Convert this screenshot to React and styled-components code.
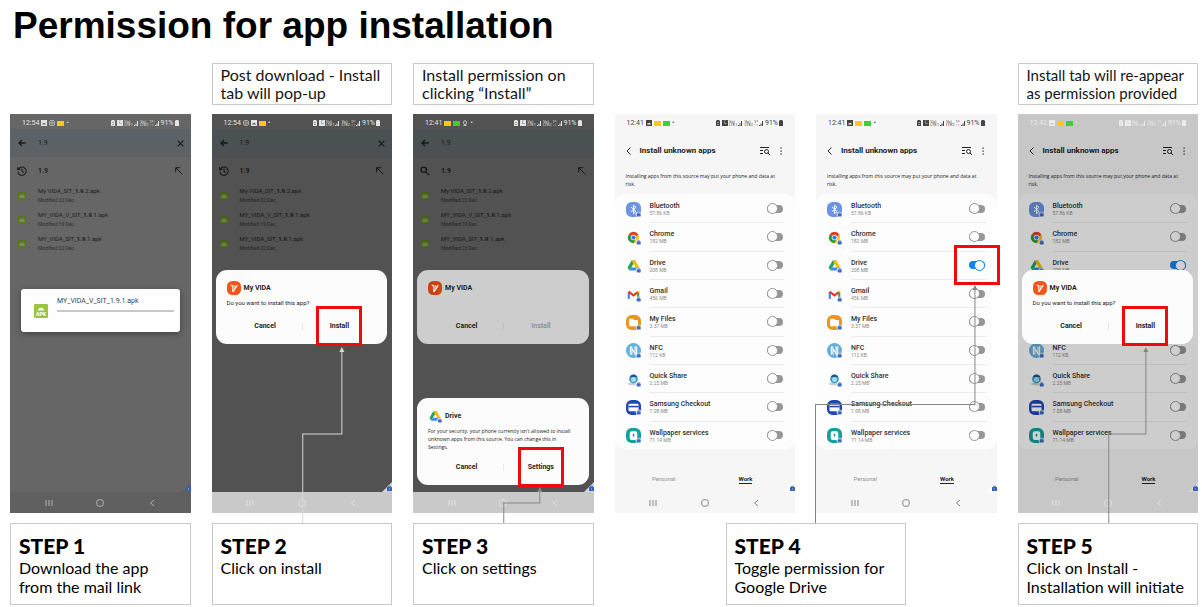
import React, { useId } from 'react';
import styled, { createGlobalStyle, css } from 'styled-components';

const GlobalStyle = createGlobalStyle`
   * {
      box-sizing: border-box;
   }
   body {
      margin: 0;
      background: #fff;
      color: #000;
      font-family: Roboto, "Liberation Sans", sans-serif;
   }
   button, input {
      font: inherit;
      color: inherit;
   }
`

const Page = styled.main`
   display: flex;
   flex-direction: column;
   padding: 0 4px 0 10px;
`
const Title = styled.h1`
   margin: 0;
   padding: 5px 0 0 3px;
   height: 63px;
   font: bold 37px/42px "Liberation Sans", sans-serif;
   white-space: nowrap;
`
const Board = styled.div`
   display: grid;
   grid-template-columns: repeat(6, minmax(0, 1fr));
   grid-template-rows: 42px auto auto;
   column-gap: 21px;
   row-gap: 9px;
`
const Note = styled.p`
   grid-column: ${({ $col }) => $col};
   grid-row: 1;
   margin: 0;
   padding: 2px 8px;
   border: 1px solid #c8c8cc;
   font: ${({ $small }) => $small ? 15 : 16}px/18px Lato, sans-serif;
   color: #151515;
   white-space: nowrap;
`
const StepCard = styled.section`
   grid-column: ${({ $col }) => $col};
   grid-row: 3;
   min-height: 82px;
   padding: 10px 8px 4px;
   border: 1px solid #c8c8cc;
   font: 16px/19px Lato, sans-serif;
   white-space: nowrap;
   ${({ $wide }) => $wide && css`
      margin: 0 91px 0 111px;
   `}
   & h2 {
      margin: 0;
      font: 900 21px/24px Lato, sans-serif;
   }
   & p {
      margin: 0;
   }
`
const Slot = styled.div`
   grid-column: ${({ $col }) => $col};
   grid-row: 2;
   position: relative;
   padding-bottom: 1px;
`
const Screen = styled.div`
   position: relative;
   display: flex;
   flex-direction: column;
   min-height: 399px;
   background: ${({ $bg }) => $bg};
   color: ${({ $ink }) => $ink};
   font-size: 7px;
   line-height: 8px;
   white-space: nowrap;
`
const Spacer = styled.div`
   flex: 1;
`
const Scrim = styled.div`
   position: absolute;
   inset: 0;
   background: rgba(0, 0, 0, 0.19);
`

/* status bar */
const StatusRow = styled.div`
   position: relative;
   z-index: 1;
   display: flex;
   align-items: center;
   height: 15px;
   padding: 3px 11px 0 12px;
   gap: 2px;
   color: ${({ $ink }) => $ink};
`
const Chip = styled.span`
   width: 7px;
   height: 5px;
   background: ${({ $color }) => $color};
`
const Network = styled.span`
   display: flex;
   flex-direction: column;
   font-size: 4px;
   line-height: 3px;
`
const StatusRight = styled.div`
   display: flex;
   align-items: center;
   gap: 1px;
   margin-left: auto;
`
const Battery = styled.span`
   display: flex;
   align-items: center;
`

/* file search screen */
const SearchBar = styled.div`
   display: flex;
   align-items: center;
   height: 28px;
   padding: 0 7px 0 8px;
   background: ${({ $bg }) => $bg};
   & input {
      flex: 1;
      min-width: 0;
      margin-left: 12px;
      padding: 0;
      border: 0;
      outline: 0;
      background: none;
   }
`
const RecentRow = styled.div`
   display: flex;
   align-items: center;
   height: 27px;
   padding: 0 8px 0 7px;
   & b {
      flex: 1;
      margin-left: 11px;
   }
`
const FileRow = styled.div`
   display: flex;
   align-items: center;
   height: 24px;
   padding: 0 8px;
   gap: 12px;
   & p {
      margin: 0;
      padding-bottom: 1px;
      font-size: 6px;
   }
   & small {
      display: block;
      margin-top: 2px;
      font-size: 5px;
      line-height: 7px;
      opacity: 0.8;
   }
`
const IconButton = styled.button`
   display: flex;
   align-items: center;
   justify-content: center;
   padding: 0;
   border: 0;
   background: none;
   cursor: pointer;
`

/* android navigation */
const NavRow = styled.nav`
   position: relative;
   z-index: 1;
   display: flex;
   justify-content: space-around;
   align-items: center;
   height: 21px;
   padding: 0 13px;
   background: ${({ $bg }) => $bg};
   color: ${({ $ink }) => $ink};
`
const WorkCorner = styled.svg`
   position: absolute;
   right: 0;
   bottom: 21px;
   width: 10px;
   height: 10px;
   z-index: 1;
`

/* settings screen */
const SettingsHead = styled.header`
   display: flex;
   align-items: center;
   height: 43px;
   padding: 0 10px;
   & h3 {
      flex: 1;
      margin: 0 0 0 7px;
      font-size: 8px;
      font-weight: 700;
   }
   & button + button {
      margin-left: 7px;
   }
`
const Hint = styled.p`
   margin: 0;
   height: 22px;
   padding: 0 11px;
   font-family: "Open Sans", sans-serif;
   font-size: 5px;
   white-space: normal;
`
const AppList = styled.ul`
   display: flex;
   flex-direction: column;
   min-height: 255px;
   margin: 0;
   padding: 1px 0 0;
   list-style: none;
   background: #fdfdfd;
   border-radius: 10px;
`
const AppItem = styled.li`
   flex: 1;
   display: flex;
   align-items: center;
   padding: 0 11px;
   visibility: ${({ $covered }) => $covered ? 'hidden' : 'visible'};
   & label {
      flex: 1;
      display: flex;
      align-items: center;
      align-self: stretch;
      margin-left: 9px;
      border-bottom: 1px solid #ececec;
   }
   &:last-child label {
      border: 0;
   }
`
const AppText = styled.span`
   flex: 1;
   padding-top: 1px;
   font-weight: 500;
   color: #303030;
   & small {
      display: block;
      font-size: 5px;
      line-height: 6px;
      font-weight: 400;
      color: #8a8a8a;
   }
`
const ToggleBox = styled.span`
   position: relative;
   display: flex;
   margin-right: 1px;
`
const Toggle = styled.input.attrs({ type: 'checkbox' })`
   appearance: none;
   display: flex;
   align-items: center;
   width: 16px;
   height: 8px;
   margin: 0;
   border-radius: 4px;
   background: #969696;
   cursor: pointer;
   &::before {
      content: "";
      width: 9px;
      height: 9px;
      border: 1px solid #969696;
      border-radius: 50%;
      background: #fff;
   }
   &:checked {
      background: #1283ec;
      justify-content: flex-end;
   }
   &:checked::before {
      border-color: #1283ec;
   }
`
const Marker = styled.span`
   position: absolute;
   left: 50%;
   top: 50%;
   width: 46px;
   height: 40px;
   transform: translate(-50%, -50%);
   border: 3px solid #ee0a0d;
   pointer-events: none;
   z-index: 2;
`
const TabRow = styled.div`
   display: flex;
   justify-content: space-around;
   padding: 0 11px 0 6px;
   height: 17px;
   font-size: 6px;
   & button {
      align-self: flex-start;
      padding: 0;
      border: 0;
      border-bottom: 1px solid transparent;
      background: none;
      color: #929292;
      line-height: 8px;
   }
   & button[aria-selected="true"] {
      border-color: #222;
      color: #222;
      font-weight: 700;
   }
`

/* dialogs */
const Sheet = styled.div`
   position: absolute;
   left: 4px;
   right: 5px;
   ${({ $low }) => $low ? 'bottom: 28px;' : 'top: 156px;'}
   min-height: ${({ $low }) => $low ? 87 : 74}px;
   display: flex;
   flex-direction: column;
   padding: 10px 11px 7px;
   border-radius: 11px;
   background: ${({ $bg }) => $bg || '#fcfcfc'};
   color: #222;
   z-index: 1;
   & p {
      margin: 3px 0 0;
      font-size: 6px;
      line-height: 8px;
      white-space: normal;
      ${({ $low }) => $low && css`
         font-family: "Open Sans", sans-serif;
         font-size: 5px;
      `}
   }
`
const SheetTitle = styled.div`
   display: flex;
   align-items: center;
   gap: 3px;
   height: 16px;
   font-weight: 700;
`
const SheetButtons = styled.div`
   display: grid;
   grid-template-columns: 1fr 1px 1fr;
   align-items: center;
   justify-items: center;
   height: 22px;
   margin-top: auto;
   padding-left: 2px;
   & hr {
      width: 1px;
      height: 7px;
      margin: 0;
      border: 0;
      background: rgba(0, 0, 0, 0.07);
   }
   & button {
      position: relative;
      padding: 0;
      border: 0;
      background: none;
      font-weight: 700;
      cursor: pointer;
   }
   & button:disabled {
      font-weight: 500;
      color: #8a8a8a;
   }
`
const DownloadCard = styled.div`
   position: absolute;
   top: 175px;
   left: 11px;
   right: 11px;
   height: 43px;
   display: flex;
   align-items: center;
   gap: 9px;
   padding: 0 6px 0 13px;
   border-radius: 3px;
   background: #fefefe;
   color: #444;
   box-shadow: 0 2px 6px rgba(0, 0, 0, 0.35);
   & div {
      flex: 1;
      padding-bottom: 13px;
   }
   & progress {
      display: block;
      appearance: none;
      width: 100%;
      height: 2px;
      margin-top: 5px;
      border: 0;
      &::-webkit-progress-bar {
         background: #c8c8c8;
      }
   }
`
const Wire = styled.svg`
   position: absolute;
   left: 0;
   top: 0;
   width: 100%;
   height: 409px;
   overflow: visible;
   pointer-events: none;
   z-index: 3;
   color: ${({ $color }) => $color};
`

const Svg = ({ size = 10, box = 24, children, ...rest }) => (
   <svg width={size} height={size} viewBox={`0 0 ${box} ${box}`} fill="none" stroke="currentColor" strokeWidth="2" {...rest}>
      {children}
   </svg>
)

const Connector = ({ d, tip, color }) => (
   <Wire $color={color} viewBox="0 0 180 409" preserveAspectRatio="none">
      <path d={d} fill="none" stroke="currentColor" strokeWidth="1" />
      <path d={`M${tip[0]} ${tip[1]}l-2.500 5h5z`} fill="currentColor" />
   </Wire>
)

const ApkIcon = ({ size, color, label }) => (
   <Svg size={size} stroke="none">
      <rect width="24" height="24" rx="2" fill={color} />
      {label
         ? <>
            <path d="M7 11a5 4.500 0 0 1 10 0z" fill="#fff" />
            <text x="12" y="20" fontSize="9" fontWeight="700" textAnchor="middle" fill="#fff">APK</text>
         </>
         : <path d="M4 17a8 8 0 0 1 16 0zM7 6l3 4M17 6l-3 4" fill="#fff" stroke="#fff" opacity="0.2" />
      }
   </Svg>
)

const VidaIcon = ({ dim }) => (
   <Svg size={14} stroke="none">
      <rect width="24" height="24" rx="9" fill={dim ? '#cc4310' : '#f4551b'} />
      <path d="M6.500 7.500l3.500.5v10.500" stroke="#fff" strokeWidth="1.800" />
      <path d="M10 18.500L17.500 7" stroke="#fff" strokeWidth="2.200" />
      <path d="M13.500 7l-1.500 5" stroke="#fff" strokeWidth="1.200" />
   </Svg>
)

const WorkBadge = () => (
   <g stroke="none">
      <circle cx="20" cy="20" r="4.500" fill="#fff" />
      <rect x="17" y="18" width="6.500" height="5" rx="1" fill="#3f6cc0" />
      <path d="M18.700 18v-1h3v1" stroke="#3f6cc0" strokeWidth="1" fill="none" />
   </g>
)

const DriveShape = () => (
   <g stroke="none">
      <path d="M9 4h6l-6.500 11L5.500 20 2.500 15z" fill="#21a464" />
      <path d="M9 4h6l6.500 11h-6z" fill="#fbbc05" />
      <path d="M8.500 15h13l-3 5h-13z" fill="#4285f4" />
   </g>
)

const appIcons = {
   bluetooth: (
      <>
         <rect width="24" height="24" rx="9" fill="#6d93e6" stroke="none" />
         <path d="M8 8l8 7-4 3.500V5l4 3.500-8 7" stroke="#fff" strokeWidth="1.600" />
      </>
   ),
   chrome: (
      <g stroke="none">
         <circle cx="12" cy="12" r="9" fill="#fbc116" />
         <path d="M12 12L4.200 7.500A9 9 0 0 1 19.800 7.500z" fill="#e33b2e" />
         <path d="M4.200 7.500A9 9 0 0 0 12 21l3.500-8z" fill="#229a48" />
         <circle cx="12" cy="12" r="4.400" fill="#fff" />
         <circle cx="12" cy="12" r="3.400" fill="#3f79e0" />
      </g>
   ),
   drive: <DriveShape />,
   gmail: (
      <g fill="none" strokeWidth="3.500">
         <path d="M4.500 19V8" stroke="#4285f4" />
         <path d="M19.500 19V8" stroke="#34a853" />
         <path d="M4 7.500l8 6 8-6" stroke="#e2392d" />
         <path d="M19.500 9V6.500" stroke="#fbbc05" />
      </g>
   ),
   files: (
      <>
         <rect width="24" height="24" rx="9" fill="#e9981c" stroke="none" />
         <path d="M6 7h5l1.500 2H18v8H6z" fill="#fff" stroke="#fff" strokeLinejoin="round" />
      </>
   ),
   nfc: (
      <>
         <circle cx="12" cy="12" r="12" fill="#64afdc" stroke="none" />
         <path d="M10 6.500H7v11h2.500V8.500l5 9V6.500H17v11h-2" stroke="#fff" strokeWidth="1.700" />
      </>
   ),
   share: (
      <g stroke="none">
         <ellipse cx="12" cy="19" rx="9" ry="2.500" fill="#c9ced4" />
         <circle cx="12" cy="11" r="7" fill="#3b9cc4" />
         <circle cx="12" cy="12" r="4" fill="#a5dcec" />
         <path d="M6 8a6.500 6.500 0 0 1 12 0z" fill="#16568b" />
      </g>
   ),
   checkout: (
      <>
         <rect width="24" height="24" rx="9" fill="#2147b5" stroke="none" />
         <rect x="4" y="6" width="16" height="12" rx="2" fill="#fff" stroke="none" />
         <path d="M4 10.500h16" stroke="#2147b5" strokeWidth="2.500" />
      </>
   ),
   wallpaper: (
      <>
         <rect width="24" height="24" rx="9" fill="#12a29b" stroke="none" />
         <rect x="6" y="5" width="12" height="14" rx="3" fill="#fff" stroke="none" />
         <path d="M12 9v5M10.500 11h3" stroke="#12a29b" strokeWidth="1.800" />
      </>
   ),
}

const AppIcon = ({ name, size = 15 }) => (
   <Svg size={size}>
      {appIcons[name]}
      <WorkBadge />
   </Svg>
)

const SignalIcon = () => (
   <Svg size={5} box={10} stroke="none">
      <path d="M0 10V8h2v2zM3 10V5h2v5zM6 10V0h2v10z" fill="currentColor" />
   </Svg>
)

const statusIcons = {
   picture: (
      <Svg key="picture" size={6} box={12} stroke="none">
         <path fillRule="evenodd" d="M0 0h12v12H0zM2 9h8L7 5 5 7 4 6z" fill="currentColor" />
      </Svg>
   ),
   camera: (
      <Svg key="camera" size={6} box={12} strokeWidth="1.200">
         <rect x="1" y="1" width="10" height="10" rx="3" />
         <circle cx="6" cy="6" r="2.500" />
      </Svg>
   ),
   bell: (
      <Svg key="bell" size={6} box={12} strokeWidth="1.500">
         <rect x="3" y="1.500" width="6" height="7.500" rx="3" />
         <path d="M3 11h6" />
      </Svg>
   ),
   yellow: <Chip key="yellow" $color="#fcc51f" />,
   green: <Chip key="green" $color="#35d335" />,
}

const StatusBar = ({ time, icons, ink }) => (
   <StatusRow $ink={ink}>
      <span>{time}</span>
      {icons.map((name) => statusIcons[name])}
      <span>•</span>
      <StatusRight>
         <Svg size={6} box={12} stroke="none">
            <path fillRule="evenodd" d="M4 0h4v1h2v11H2V1h2zM4 5h4V4H4zM4 9h4V8H4z" fill="currentColor" />
         </Svg>
         <Svg size={6} box={12} stroke="none">
            <path fillRule="evenodd" d="M0 0h4l2 1 2-1h4v12H0zM5 3v4h4V6H6V3z" fill="currentColor" />
         </Svg>
         <Network><span>Vo)</span><span>LTE1</span></Network>
         <SignalIcon />
         <Network><span>Vo)</span><span>LTE2</span></Network>
         <Network><span>1º</span><span>↓↑</span></Network>
         <SignalIcon />
         <Battery>
            91%
            <Svg size={6} box={12} stroke="none">
               <path d="M4 0h4v1h2v11H2V1h2z" fill="currentColor" />
            </Svg>
         </Battery>
      </StatusRight>
   </StatusRow>
)

const NavBar = ({ bg, ink }) => (
   <NavRow $bg={bg} $ink={ink}>
      <IconButton aria-label="Recents">
         <Svg size={8} box={8} strokeWidth="1"><path d="M1 1v6M4 1v6M7 1v6" /></Svg>
      </IconButton>
      <IconButton aria-label="Home">
         <Svg size={8} box={8} strokeWidth="1"><rect x="0.800" y="0.800" width="6.400" height="6.400" rx="2" /></Svg>
      </IconButton>
      <IconButton aria-label="Back">
         <Svg size={8} box={8} strokeWidth="1"><path d="M6 1L2.500 4 6 7" /></Svg>
      </IconButton>
   </NavRow>
)

const Corner = ({ fill }) => (
   <WorkCorner viewBox="0 0 10 10">
      <path d="M10 0v10H0z" fill={fill} />
      <rect x="5" y="5" width="5" height="4" rx="0.500" fill="#3460b5" />
      <path d="M6.500 5v-0.800h2V5" stroke="#3460b5" strokeWidth="0.800" fill="none" />
      <path d="M7 7h1" stroke="#c9d6f0" strokeWidth="0.800" />
   </WorkCorner>
)

const files = [
   { name: ['My VIDA_SIT_', '1.9', '.2.apk'], date: 'Modified 22 Dec' },
   { name: ['MY_VIDA_V_SIT_', '1.9', '.1.apk'], date: 'Modified 19 Dec' },
   { name: ['MY_VIDA_SIT_', '1.9', '.1.apk'], date: 'Modified 22 Dec' },
];

const light = { bg: '#666', bar: '#5c6266', ink: '#1c1c1c', apk: '#58751f', nav: '#606060', navInk: '#b4b4b4', corner: '#5f6064' };
const dark = { bg: '#525252', bar: '#4b5052', ink: '#161616', apk: '#4a611d', nav: '#c9c9c9', navInk: '#e2e2e2', corner: '#d2d4d8' };

const FilesScreen = ({ time, icons, tone, searched, children }) => (
   <Screen $bg={tone.bg} $ink={tone.ink}>
      <StatusBar time={time} icons={icons} ink="#e4e4e4" />
      <SearchBar $bg={tone.bar}>
         <IconButton aria-label="Back">
            <Svg size={8} strokeWidth="4"><path d="M23 12H4M12 3l-9 9 9 9" /></Svg>
         </IconButton>
         <input aria-label="Search files" defaultValue="1.9" />
         {!searched &&
            <IconButton aria-label="Clear">
               <Svg size={7} strokeWidth="4"><path d="M2 2l20 20M22 2L2 22" /></Svg>
            </IconButton>
         }
      </SearchBar>
      <RecentRow>
         {searched
            ? <Svg size={10} strokeWidth="3"><circle cx="9" cy="9" r="6.500" /><path d="M14 14l8 8" /></Svg>
            : <Svg size={10} strokeWidth="2.500"><path d="M3 8a10 10 0 1 1-1 5M1 3l1 6 6-1M12 6v7l5 3" /></Svg>
         }
         <b>1.9</b>
         <Svg size={8} strokeWidth="3"><path d="M22 22L3 3M2 16V2h14" /></Svg>
      </RecentRow>
      {files.map(({ name, date }) => (
         <FileRow key={name.join('')}>
            <ApkIcon size={8} color={tone.apk} />
            <p>
               {name[0]}<b>{name[1]}</b>{name[2]}
               <small>{date}</small>
            </p>
         </FileRow>
      ))}
      <Spacer />
      {children}
      <Corner fill={tone.corner} />
      <NavBar bg={tone.nav} ink={tone.navInk} />
   </Screen>
)

const apps = [
   { icon: 'bluetooth', name: 'Bluetooth', size: '57.86 KB' },
   { icon: 'chrome', name: 'Chrome', size: '182 MB' },
   { icon: 'drive', name: 'Drive', size: '208 MB' },
   { icon: 'gmail', name: 'Gmail', size: '456 MB' },
   { icon: 'files', name: 'My Files', size: '3.37 MB' },
   { icon: 'nfc', name: 'NFC', size: '112 KB' },
   { icon: 'share', name: 'Quick Share', size: '2.25 MB' },
   { icon: 'checkout', name: 'Samsung Checkout', size: '7.08 MB' },
   { icon: 'wallpaper', name: 'Wallpaper services', size: '71.14 MB' },
];

// rows that lie fully behind the install dialog
const coveredRows = ['gmail', 'files'];

const SettingsScreen = ({ time, driveOn, marked, dimmed, children }) => {
   const id = useId();
   return (
      <Screen $bg="#f6f6f6" $ink="#222">
         <StatusBar time={time} icons={['picture', 'yellow', 'green']} ink={dimmed ? '#ececec' : '#444'} />
         <SettingsHead>
            <IconButton aria-label="Back">
               <Svg size={8} box={8} strokeWidth="1"><path d="M5.500 0.500L2 4l3.500 3.500" /></Svg>
            </IconButton>
            <h3>Install unknown apps</h3>
            <IconButton aria-label="Search">
               <Svg size={10} box={10} strokeWidth="1">
                  <path d="M0 1.500h9M0 4.500h3M0 7.500h3" />
                  <circle cx="6.500" cy="5.500" r="2" />
                  <path d="M8 7l2 2" />
               </Svg>
            </IconButton>
            <IconButton aria-label="More">
               <Svg size={8} box={8} stroke="none">
                  <path d="M3.500 0.500h1.200v1.200H3.500zM3.500 3.500h1.200v1.200H3.500zM3.500 6.500h1.200v1.200H3.500z" fill="currentColor" />
               </Svg>
            </IconButton>
         </SettingsHead>
         <Hint>Installing apps from this source may put your phone and data at risk.</Hint>
         <AppList>
            {apps.map(({ icon, name, size }) => (
               <AppItem key={icon} $covered={dimmed && coveredRows.includes(icon)}>
                  <AppIcon name={icon} />
                  <label htmlFor={id + icon}>
                     <AppText>{name}<small>{size}</small></AppText>
                     <ToggleBox>
                        <Toggle id={id + icon} defaultChecked={icon === 'drive' && driveOn} />
                        {icon === 'drive' && marked && <Marker />}
                     </ToggleBox>
                  </label>
               </AppItem>
            ))}
         </AppList>
         <Spacer />
         <TabRow role="tablist">
            <button role="tab" aria-selected="false">Personal</button>
            <button role="tab" aria-selected="true">Work</button>
         </TabRow>
         {dimmed && <Scrim />}
         <Corner fill={dimmed ? '#d6d6d6' : '#fff'} />
         <NavBar bg="transparent" ink={dimmed ? '#e2e2e2' : '#858585'} />
         {children}
      </Screen>
   )
}

const InstallSheet = ({ pending }) => (
   <Sheet role="dialog" aria-label="My VIDA" $bg={pending && '#cdcdcd'}>
      <SheetTitle><VidaIcon dim={pending} />My VIDA</SheetTitle>
      {!pending && <p>Do you want to install this app?</p>}
      <SheetButtons>
         <button>Cancel</button>
         <hr />
         <button disabled={pending}>Install{!pending && <Marker />}</button>
      </SheetButtons>
   </Sheet>
)

const App = () => (
   <>
      <GlobalStyle />
      <Page>
         <Title>Permission for app installation</Title>
         <Board>
            <Note $col={2}>Post download - Install<br />tab will pop-up</Note>
            <Note $col={3}>Install permission on<br />clicking “Install”</Note>
            <Note $col={6} $small>Install tab will re-appear<br />as permission provided</Note>

            <Slot $col={1}>
               <FilesScreen time="12:54" icons={['picture', 'camera', 'yellow']} tone={light}>
                  <DownloadCard>
                     <ApkIcon size={14} color="#9cc443" label />
                     <div>
                        MY_VIDA_V_SIT_1.9.1.apk
                        <progress value="0" max="100" aria-label="Download progress" />
                     </div>
                  </DownloadCard>
               </FilesScreen>
            </Slot>
            <Slot $col={2}>
               <FilesScreen time="12:54" icons={['camera', 'picture', 'yellow']} tone={dark}>
                  <InstallSheet />
               </FilesScreen>
               <Connector d="M90.500 409V320H129.500V236" tip={[129.5, 233]} color="#d8d8d8" />
            </Slot>
            <Slot $col={3}>
               <FilesScreen time="12:41" icons={['yellow', 'green', 'bell']} tone={dark} searched>
                  <InstallSheet pending />
                  <Sheet role="dialog" aria-label="Drive" $low>
                     <SheetTitle><AppIcon name="drive" size={14} />Drive</SheetTitle>
                     <p>For your security, your phone currently isn't allowed to install unknown apps from this source. You can change this in Settings.</p>
                     <SheetButtons>
                        <button>Cancel</button>
                        <hr />
                        <button>Settings<Marker /></button>
                     </SheetButtons>
                  </Sheet>
               </FilesScreen>
               <Connector d="M90.500 409V389H126.500V376" tip={[126.5, 373]} color="#868686" />
            </Slot>
            <Slot $col={4}>
               <SettingsScreen time="12:41" />
            </Slot>
            <Slot $col={5}>
               <SettingsScreen time="12:41" driveOn marked />
               <Connector d="M-0.500 409V290.500H158.500V174" tip={[158.5, 171]} color="#868686" />
            </Slot>
            <Slot $col={6}>
               <SettingsScreen time="12:42" driveOn dimmed>
                  <InstallSheet />
               </SettingsScreen>
               <Connector d="M90.500 409V320H127.500V236" tip={[127.5, 233]} color="#868686" />
            </Slot>

            <StepCard $col={1}><h2>STEP 1</h2><p>Download the app<br />from the mail link</p></StepCard>
            <StepCard $col={2}><h2>STEP 2</h2><p>Click on install</p></StepCard>
            <StepCard $col={3}><h2>STEP 3</h2><p>Click on settings</p></StepCard>
            <StepCard $col="4 / 6" $wide><h2>STEP 4</h2><p>Toggle permission for<br />Google Drive</p></StepCard>
            <StepCard $col={6}><h2>STEP 5</h2><p>Click on Install -<br />Installation will initiate</p></StepCard>
         </Board>
      </Page>
   </>
)

export default App;
